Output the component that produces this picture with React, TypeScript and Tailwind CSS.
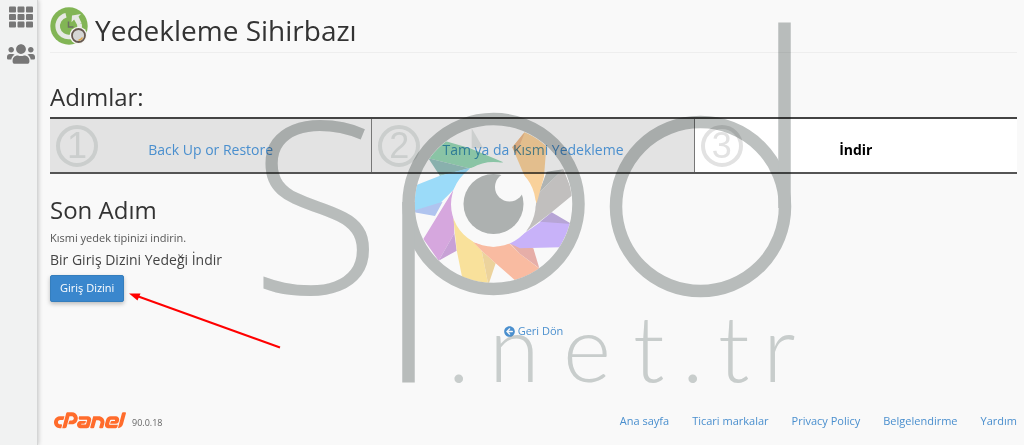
import { FaArrowCircleLeft, FaCpanel, FaTh, FaUsers } from "react-icons/fa";

interface Step {
  number: number;
  label: string;
  href?: string;
}

const steps: Step[] = [
  { number: 1, label: "Back Up or Restore", href: "#restore" },
  { number: 2, label: "Tam ya da Kısmi Yedekleme", href: "#backup-type" },
  { number: 3, label: "İndir" },
];

const footerLinks = [
  { label: "Ana sayfa", href: "#home" },
  { label: "Ticari markalar", href: "#trademarks" },
  { label: "Privacy Policy", href: "#privacy" },
  { label: "Belgelendirme", href: "#docs" },
  { label: "Yardım", href: "#help" },
];

// shutter blades of the watermark eye, main face first and then its fold
const blades = [
  { fill: "#9bdcb9", points: "165,108 240,130 340,172 237,190 115,160" },
  { fill: "#9ac6c2", points: "115,160 237,190 150,213" },
  { fill: "#9fe1ff", points: "60,248 150,212 240,188 190,255 150,295 60,322" },
  { fill: "#b4c9f5", points: "60,320 158,290 135,333" },
  { fill: "#dbabe4", points: "190,255 187,300 192,350 193,385 146,467 100,402" },
  { fill: "#cda5db", points: "193,385 200,437 146,467" },
  { fill: "#ffe79f", points: "190,340 250,410 275,437 295,540 218,525 200,435" },
  { fill: "#f2d8a0", points: "275,437 317,475 295,540" },
  { fill: "#ffc0a5", points: "250,412 310,425 358,415 388,445 450,492 380,530 317,475 275,437" },
  { fill: "#ecb2ac", points: "360,415 430,430 448,490 388,445" },
  { fill: "#cdb7ff", points: "358,415 425,370 455,348 545,355 510,427 390,430" },
  { fill: "#bca9dc", points: "485,322 545,357 450,350" },
  { fill: "#c6c4c3", points: "520,193 550,268 485,322 408,380 437,300 445,265" },
  { fill: "#b4b9b8", points: "520,193 470,200 459,230 445,265" },
  { fill: "#ffd69f", points: "405,80 470,112 462,215 440,295 400,205 367,127" },
  { fill: "#f2bd8d", points: "405,80 378,150 367,127" },
  { fill: "#e6e9e8", points: "245,70 280,130 245,130" },
];

const Sidebar = () => (
  <nav
    aria-label="Main"
    className="w-[38px] shrink-0 flex flex-col items-center gap-[11px] pl-1 pt-[5px] bg-[#f1f2f2] border-r border-[#d5d6d6] shadow-[1px_0_4px_rgba(0,0,0,0.18)] text-[#777]"
  >
    <button type="button" aria-label="Home" className="cursor-pointer">
      <FaTh size={24} />
    </button>
    <button type="button" aria-label="User manager" className="cursor-pointer">
      <FaUsers size={28} />
    </button>
  </nav>
);

const WizardIcon = () => (
  <svg width="38" height="38" viewBox="0 0 38 38" className="shrink-0" aria-hidden="true">
    <circle cx="19" cy="19" r="18.7" fill="#82b555" />
    <path
      d="M16 8.3A11 11 0 1 0 29.5 17"
      fill="none"
      stroke="#e6e9e3"
      strokeWidth="4.6"
    />
    <path d="M22 8.5l9-1.5-2.5 2.6 3 6.4-4 2.6-3.4-6-2.6 2.6z" fill="#e6e9e3" />
    <path d="M18.5 14.5v5.5h5" fill="none" stroke="#6b7060" strokeWidth="1.5" />
    <circle cx="28.5" cy="28.5" r="8.8" fill="#f5f5f2" />
    <circle cx="28.5" cy="28.5" r="6.5" fill="#d5d6d4" stroke="#66584f" strokeWidth="1.8" />
    <path d="M32.5 30.5a5 5 0 0 1-4 2.7" fill="none" stroke="#dca446" strokeWidth="1.6" />
  </svg>
);

const StepItem = ({ step }: { step: Step }) => (
  <li
    aria-current={step.href ? undefined : "step"}
    className={`grid grid-cols-[42px_1fr_42px] items-center px-1.5 h-[53px] ${
      step.href ? "bg-[#e3e3e3] border-r border-[#777]" : "bg-white"
    }`}
  >
    <span
      className={`flex size-[42px] items-center justify-center rounded-full border-4 font-['Liberation_Sans',sans-serif] text-[36px] leading-none ${
        step.href
          ? "border-[#cbcecd] text-[#cbcecd]"
          : "border-[#e2e2e2] text-[#e2e2e2]"
      }`}
    >
      {step.number}
    </span>
    <span className="pt-2 text-center text-sm">
      {step.href ? (
        <a href={step.href} className="text-[#4a8fce]">
          {step.label}
        </a>
      ) : (
        <strong className="font-bold text-black">{step.label}</strong>
      )}
    </span>
  </li>
);

const Watermark = () => (
  <svg
    width="530"
    height="376"
    viewBox="270 16 530 376"
    className="pointer-events-none absolute left-[270px] top-4 overflow-visible mix-blend-multiply"
    aria-hidden="true"
  >
    <defs>
      <clipPath id="iris">
        <path
          clipRule="evenodd"
          d="M310 62a236 236 0 1 0 .1 0zM310 171a127 127 0 1 0 .1 0z"
        />
      </clipPath>
      <mask id="glint">
        <rect x="440" y="150" width="110" height="110" fill="#fff" />
        <circle cx="509.5" cy="187" r="14.5" fill="#000" />
      </mask>
    </defs>
    <g transform="translate(390 105) scale(.33333)">
      <g clipPath="url(#iris)">
        {blades.map((blade) => (
          <polygon key={blade.points} points={blade.points} fill={blade.fill} />
        ))}
      </g>
    </g>
    <circle cx="493.5" cy="204" r="30" fill="#b1b5b4" mask="url(#glint)" />
    <g fill="none" stroke="#bdc1c0" strokeWidth="12.5">
      <circle cx="493.5" cy="204" r="85" />
      <path d="M408.5 202V382.5" />
      <circle cx="700.5" cy="206.5" r="84.5" />
      <path d="M784.5 22.5V208" />
    </g>
    <text
      x="316"
      y="294"
      textAnchor="middle"
      fill="#bdc1c0"
      fontSize="240"
      fontWeight="300"
      fontFamily="'Open Sans', sans-serif"
    >
      S
    </text>
    <text
      x="448 489 563 633 682 718 763"
      y="382"
      fill="#cdd2d1"
      fontSize="92"
      fontWeight="300"
      fontFamily="Lato, sans-serif"
    >
      .net.tr
    </text>
  </svg>
);

const Arrow = () => (
  <svg
    width="152"
    height="58"
    viewBox="0 0 152 58"
    className="pointer-events-none absolute left-[129px] top-[291px]"
    aria-hidden="true"
  >
    <path d="M8 5L151 56.5" stroke="#f00" strokeWidth="2" />
    <path d="M0 2.5L11.5 2.5L8.5 9.5z" fill="#f00" />
  </svg>
);

export default function App() {
  return (
    <div className="relative flex min-h-screen bg-[#f9f9f9] font-['Open_Sans',sans-serif] text-[#333]">
      <Sidebar />

      <div className="flex min-w-0 flex-1 flex-col pl-3 pr-[7px]">
        <header className="flex h-[53px] items-center gap-[7px] border-b border-[#eee]">
          <WizardIcon />
          <h1 className="pt-2 text-[28px] leading-9">Yedekleme Sihirbazı</h1>
        </header>

        <main>
          <h2 className="mt-7 text-2xl">Adımlar:</h2>
          <ol className="mt-1 grid grid-cols-3 border-y-2 border-[#555] border-t-[#444]">
            {steps.map((step) => (
              <StepItem key={step.number} step={step} />
            ))}
          </ol>

          <h2 className="mt-5 text-2xl">Son Adım</h2>
          <p className="mt-1 text-[11px] leading-4 text-[#555]">
            Kısmi yedek tipinizi indirin.
          </p>
          <h3 className="mt-1 text-sm leading-5 text-[#444]">Bir Giriş Dizini Yedeği İndir</h3>
          <button
            type="button"
            className="mt-[5px] h-[27px] cursor-pointer rounded-xs border border-[#357ebd] bg-[#3a87cd] px-[9px] text-[11px] text-white shadow-[0_2px_4px_rgba(0,0,0,0.25)]"
          >
            Giriş Dizini
          </button>

          <div className="mt-[21px] flex justify-center">
            <a
              href="#back"
              className="flex items-center gap-[3px] text-[11px] leading-4 text-[#4a8fce]"
            >
              <FaArrowCircleLeft size={11} />
              Geri Dön
            </a>
          </div>
        </main>

        <footer className="mt-auto flex items-center justify-between pb-3">
          <div className="flex items-center gap-[6px] pl-1">
            <FaCpanel size={72} className="-my-6 text-[#ff6c2c]" aria-label="cPanel" />
            <span className="pt-1 text-[9px] text-[#666]">90.0.18</span>
          </div>
          <ul className="flex gap-[23px] text-[11px] leading-6 text-[#4a8fce]">
            {footerLinks.map((link) => (
              <li key={link.label}>
                <a href={link.href}>{link.label}</a>
              </li>
            ))}
          </ul>
        </footer>
      </div>

      <Arrow />
      <Watermark />
    </div>
  );
}
